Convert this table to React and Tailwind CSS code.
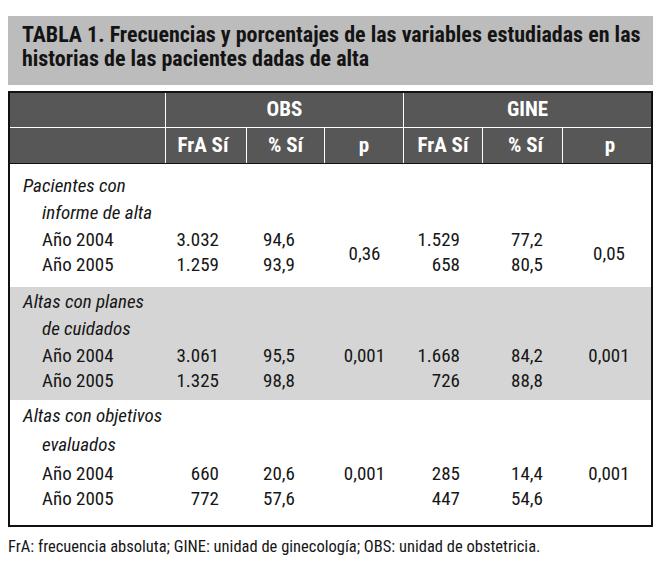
import React from 'react';

const cols = 'grid grid-cols-[156px_81px_78px_79px_79px_80px_1fr]';

const groups = [
  {
    title: 'Pacientes con',
    sub: 'informe de alta',
    bg: 'bg-white',
    pad: 'pt-[9px] pb-[10px]',
    subH: 'h-[28px] leading-[28px]',
    rows: [
      ['Año 2004', '3.032', '94,6', '1.529', '77,2'],
      ['Año 2005', '1.259', '93,9', '658', '80,5'],
    ],
    pObs: '0,36',
    pGine: '0,05',
    centerP: true,
  },
  {
    title: 'Altas con planes',
    sub: 'de cuidados',
    bg: 'bg-[#d5d5d5]',
    pad: 'pt-[2px] pb-[7px]',
    subH: 'h-[28px] leading-[28px]',
    rows: [
      ['Año 2004', '3.061', '95,5', '1.668', '84,2'],
      ['Año 2005', '1.325', '98,8', '726', '88,8'],
    ],
    pObs: '0,001',
    pGine: '0,001',
  },
  {
    title: 'Altas con objetivos',
    sub: 'evaluados',
    bg: 'bg-white',
    pad: 'pt-[3px] pb-[14px]',
    subH: 'h-[32px] leading-[32px]',
    rows: [
      ['Año 2004', '660', '20,6', '285', '14,4'],
      ['Año 2005', '772', '57,6', '447', '54,6'],
    ],
    pObs: '0,001',
    pGine: '0,001',
  },
];

// row classes for the two year lines
const rowCls = ['row-start-1 h-[26px] leading-[26px]', 'row-start-2 h-[24px] leading-[24px]'];

function Group({ g }) {
  return (
    <div className={`${g.bg} ${g.pad}`}>
      <div className="h-[26px] leading-[26px] pl-[13px] italic whitespace-nowrap">{g.title}</div>
      <div className={`${g.subH} pl-[32px] italic whitespace-nowrap`}>{g.sub}</div>
      <div className={`${cols} grid-rows-[26px_24px]`}>
        {g.rows.map((r, i) => (
          <React.Fragment key={r[0]}>
            <div className={`${rowCls[i]} col-start-1 pl-[32px]`}>{r[0]}</div>
            <div className={`${rowCls[i]} col-start-2 text-right pr-[28px]`}>{r[1]}</div>
            <div className={`${rowCls[i]} col-start-3 text-right pr-[30px]`}>{r[2]}</div>
            <div className={`${rowCls[i]} col-start-5 text-right pr-[23px]`}>{r[3]}</div>
            <div className={`${rowCls[i]} col-start-6 text-right pr-[20px]`}>{r[4]}</div>
          </React.Fragment>
        ))}
        {g.centerP ? (
          <>
            <div className="col-start-4 row-start-1 row-span-2 flex items-center justify-center pt-[5px]">{g.pObs}</div>
            <div className="col-start-7 row-start-1 row-span-2 flex items-center justify-center pl-[4px] pt-[5px]">{g.pGine}</div>
          </>
        ) : (
          <>
            <div className="col-start-4 row-start-1 h-[26px] leading-[26px] text-center">{g.pObs}</div>
            <div className="col-start-7 row-start-1 h-[26px] leading-[26px] text-center pl-[4px]">{g.pGine}</div>
          </>
        )}
      </div>
    </div>
  );
}

export default function App() {
  return (
    <div className="bg-white w-[662px] h-[578px] pt-4 pl-2 font-['Roboto_Condensed','Roboto',sans-serif] text-[#161616]">
      {/* title */}
      <div className="w-[645px] bg-[#bcbcbc] pl-[14px] pt-[7px] pb-[14px] text-[22px] leading-[24px] font-bold text-[#141414]">
        <p>TABLA 1. Frecuencias y porcentajes de las variables estudiadas en las</p>
        <p>historias de las pacientes dadas de alta</p>
      </div>

      {/* table */}
      <div className="mt-[6px] w-[645px] border-2 border-[#111]">
        <div className="bg-[#575757] text-white font-bold text-[21px] border-b border-[#111]">
          <div className={`${cols} h-[35px] border-b border-white`}>
            <div className="border-r border-white"></div>
            <div className="col-span-3 border-r border-white flex items-center justify-center">OBS</div>
            <div className="col-span-3 flex items-center justify-center">GINE</div>
          </div>
          <div className={`${cols} h-[35px]`}>
            <div className="border-r border-white"></div>
            <div className="border-r border-white flex items-center justify-center pr-[6px]">FrA Sí</div>
            <div className="border-r border-white flex items-center justify-center">% Sí</div>
            <div className="border-r border-white flex items-center justify-center">p</div>
            <div className="border-r border-white flex items-center justify-center">FrA Sí</div>
            <div className="border-r border-white flex items-center justify-center pl-[6px]">% Sí</div>
            <div className="flex items-center justify-center pl-[6px]">p</div>
          </div>
        </div>

        <div className="text-[19px]">
          {groups.map((g) => (
            <Group key={g.title} g={g} />
          ))}
        </div>
      </div>

      <p className="mt-[10px] text-[16.5px] leading-[20px] whitespace-nowrap">
        FrA: frecuencia absoluta; GINE: unidad de ginecología; OBS: unidad de obstetricia.
      </p>
    </div>
  );
}
